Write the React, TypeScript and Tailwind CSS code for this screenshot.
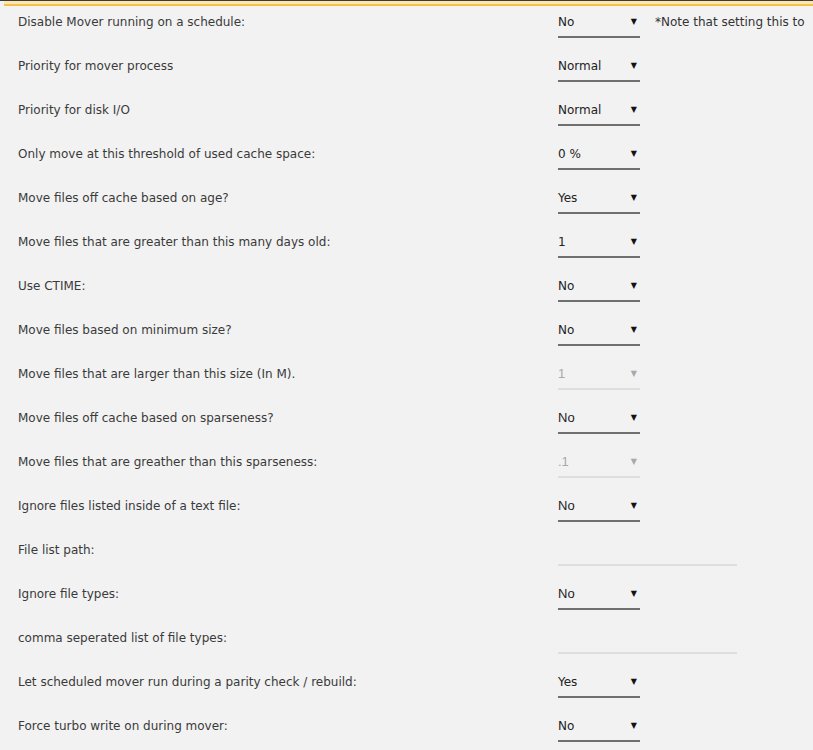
import React from "react";

type Row = {
  label: string;
  kind: "select" | "text";
  value?: string;
  disabled?: boolean;
  arial?: boolean;
  note?: string;
};

const rows: Row[] = [
  { label: "Disable Mover running on a schedule:", kind: "select", value: "No", note: "*Note that setting this to" },
  { label: "Priority for mover process", kind: "select", value: "Normal" },
  { label: "Priority for disk I/O", kind: "select", value: "Normal" },
  { label: "Only move at this threshold of used cache space:", kind: "select", value: "0 %" },
  { label: "Move files off cache based on age?", kind: "select", value: "Yes" },
  { label: "Move files that are greater than this many days old:", kind: "select", value: "1" },
  { label: "Use CTIME:", kind: "select", value: "No" },
  { label: "Move files based on minimum size?", kind: "select", value: "No" },
  { label: "Move files that are larger than this size (In M).", kind: "select", value: "1", disabled: true, arial: true },
  { label: "Move files off cache based on sparseness?", kind: "select", value: "No", arial: true },
  { label: "Move files that are greather than this sparseness:", kind: "select", value: ".1", disabled: true, arial: true },
  { label: "Ignore files listed inside of a text file:", kind: "select", value: "No", arial: true },
  { label: "File list path:", kind: "text" },
  { label: "Ignore file types:", kind: "select", value: "No", arial: true },
  { label: "comma seperated list of file types:", kind: "text" },
  { label: "Let scheduled mover run during a parity check / rebuild:", kind: "select", value: "Yes" },
  { label: "Force turbo write on during mover:", kind: "select", value: "No" },
];

function Select({ row }: { row: Row }) {
  return (
    <div
      className={
        row.disabled
          ? "mt-[2px] h-[30px] w-[82px] flex items-center justify-between border-b-2 border-[#dedede] text-[#a8a8a8]"
          : "mt-[2px] h-[30px] w-[82px] flex items-center justify-between border-b-2 border-[#707070] text-[#222]"
      }
    >
      <span
        className={
          row.arial
            ? "text-[13px] font-['Liberation_Sans',Arial,sans-serif]"
            : "text-[12px]"
        }
      >
        {row.value}
      </span>
      <span className={row.disabled ? "text-[8px] pr-[3px] text-[#a8a8a8]" : "text-[8px] pr-[3px] text-[#111]"}>
        ▼
      </span>
    </div>
  );
}

export default function App() {
  return (
    <div className="w-[813px] h-[750px] overflow-hidden bg-[#f2f2f2] text-[#333] font-['DejaVu_Sans',sans-serif]">
      {/* top accent band */}
      <div className="h-[6px] border-t border-[#3a3a3a] pl-[4px]">
        <div className="h-[5px] bg-[#fbe6ad] border-b-2 border-[#f6bd4f]" />
      </div>

      {rows.map((r) => (
        <div key={r.label} className="h-[44px] flex items-start">
          <div className="w-[558px] pl-[18px] mt-[8px] leading-[17px] text-[12px] text-[#3a3a3a]">
            {r.label}
          </div>
          {r.kind === "select" ? (
            <Select row={r} />
          ) : (
            <div className="mt-[2px] h-[30px] w-[179px] border-b-2 border-[#dedede]" />
          )}
          {r.note && (
            <div className="ml-[15px] mt-[8px] leading-[17px] text-[12px] whitespace-nowrap text-[#333]">
              {r.note}
            </div>
          )}
        </div>
      ))}
    </div>
  );
}
